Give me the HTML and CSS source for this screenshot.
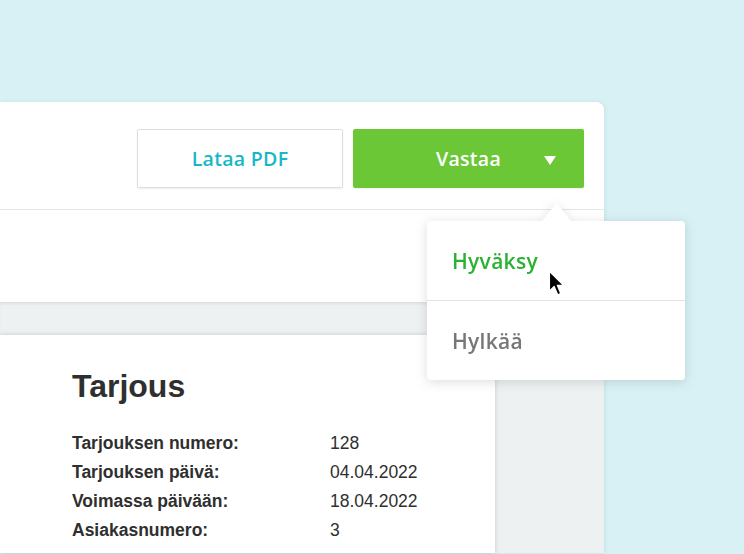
FILE: index.html
```html
<!DOCTYPE html>
<html lang="fi">
<head>
<meta charset="utf-8">
<title>Tarjous</title>
<link rel="stylesheet" href="styles.css">
</head>
<body>
<div class="panel">
  <div class="topbar">
    <button class="btn btn-outline">Lataa PDF</button>
    <div class="split">
      <button class="btn btn-primary">Vastaa<span class="arrow"></span></button>
      <div class="menu-wrap">
        <div class="caret"></div>
        <div class="menu">
          <div class="menu-item accept">Hyväksy
            <svg class="cursor" width="17" height="26" viewBox="0 0 14 22"><path d="M1 1 V18 L5 14 L8 21 L10.6 19.9 L7.7 13 H13 Z" fill="#000" stroke="#fff" stroke-width="1.1" stroke-linejoin="round"/></svg>
          </div>
          <div class="menu-item reject">Hylkää</div>
        </div>
      </div>
    </div>
  </div>
  <div class="subbar"></div>
  <div class="workspace">
    <div class="doc">
      <h1 class="doc-title">Tarjous</h1>
      <div class="doc-rows">
        <div class="label">Tarjouksen numero:</div><div class="value">128</div>
        <div class="label">Tarjouksen päivä:</div><div class="value">04.04.2022</div>
        <div class="label">Voimassa päivään:</div><div class="value">18.04.2022</div>
        <div class="label">Asiakasnumero:</div><div class="value">3</div>
      </div>
    </div>
  </div>
</div>
</body>
</html>
```
FILE: styles.css
```css
html, body {
  margin: 0;
  padding: 0;
}
body {
  background: #d8f1f5;
  height: 554px;
  overflow: hidden;
  font-family: "Open Sans", "Noto Sans", sans-serif;
}
.panel {
  margin-top: 102px;
  width: 604px;
  height: 451px;
  background: #edf1f2;
  border-top-right-radius: 8px;
  display: flex;
  flex-direction: column;
  box-shadow: 1px 0 4px rgba(0, 0, 0, 0.07);
}
.topbar {
  height: 108px;
  box-sizing: border-box;
  background: #fff;
  border-top-right-radius: 8px;
  border-bottom: 1px solid #e2e6e7;
  box-shadow: 0 1px 1px rgba(0, 0, 0, 0.03);
  display: flex;
  justify-content: flex-end;
  align-items: flex-start;
  gap: 10px;
  padding: 27px 20px 0 0;
}
.btn {
  height: 59px;
  box-sizing: border-box;
  display: flex;
  align-items: center;
  justify-content: center;
  font-family: "Open Sans", sans-serif;
  font-weight: 600;
  font-size: 19.5px;
  line-height: 1;
  letter-spacing: 0.3px;
  border-radius: 2px;
  padding: 0;
  margin: 0;
}
.btn-outline {
  width: 206px;
  background: #fff;
  color: #17b7c7;
  border: 1px solid #dddfe0;
  box-shadow: 0 1px 2px rgba(0, 0, 0, 0.07);
}
.split {
  position: relative;
}
.btn-primary {
  width: 231px;
  background: #6cc737;
  color: #fff;
  border: none;
  position: relative;
  box-shadow: 0 1px 2px rgba(0, 0, 0, 0.06);
}
.arrow {
  position: absolute;
  right: 28px;
  top: 27px;
  width: 0;
  height: 0;
  border-left: 6.5px solid transparent;
  border-right: 6.5px solid transparent;
  border-top: 9px solid #fff;
}
.menu-wrap {
  position: absolute;
  left: 74px;
  top: 74px;
  width: 258px;
  filter: drop-shadow(0 2px 6px rgba(0, 0, 0, 0.13));
  z-index: 5;
}
.caret {
  width: 29px;
  height: 18px;
  margin-left: 115px;
  background: #fff;
  clip-path: polygon(50% 0, 100% 100%, 0 100%);
}
.menu {
  background: #fff;
  border-radius: 4px;
  height: 159px;
}
.menu-item {
  height: 79px;
  display: flex;
  align-items: center;
  padding-left: 25px;
  font-weight: 600;
  font-size: 21px;
  letter-spacing: 0.3px;
  position: relative;
}
.accept {
  color: #2bb232;
  border-bottom: 1px solid #dfe3e4;
}
.reject {
  color: #777;
}
.cursor {
  position: absolute;
  left: 121px;
  top: 49px;
}
.subbar {
  height: 92px;
  background: #fff;
}
.workspace {
  flex: 1;
  border-top: 1px solid #dbe0e1;
  box-shadow: inset 0 2px 2px rgba(0, 0, 0, 0.04);
  padding-top: 32px;
  display: flex;
  min-height: 0;
}
.doc {
  width: 495px;
  background: #fff;
  box-shadow: 0 0 5px rgba(0, 0, 0, 0.16);
  padding: 32px 0 0 72px;
  box-sizing: border-box;
  font-family: "Liberation Sans", Arial, sans-serif;
  color: #2f2f2f;
}
.doc-title {
  margin: 0;
  font-size: 32px;
  font-weight: 700;
  line-height: 38px;
}
.doc-rows {
  margin-top: 24px;
  display: grid;
  grid-template-columns: 258px auto;
  font-size: 17.5px;
  line-height: 29px;
}
.label {
  font-weight: 700;
}
.value {
  font-weight: 400;
}
```
